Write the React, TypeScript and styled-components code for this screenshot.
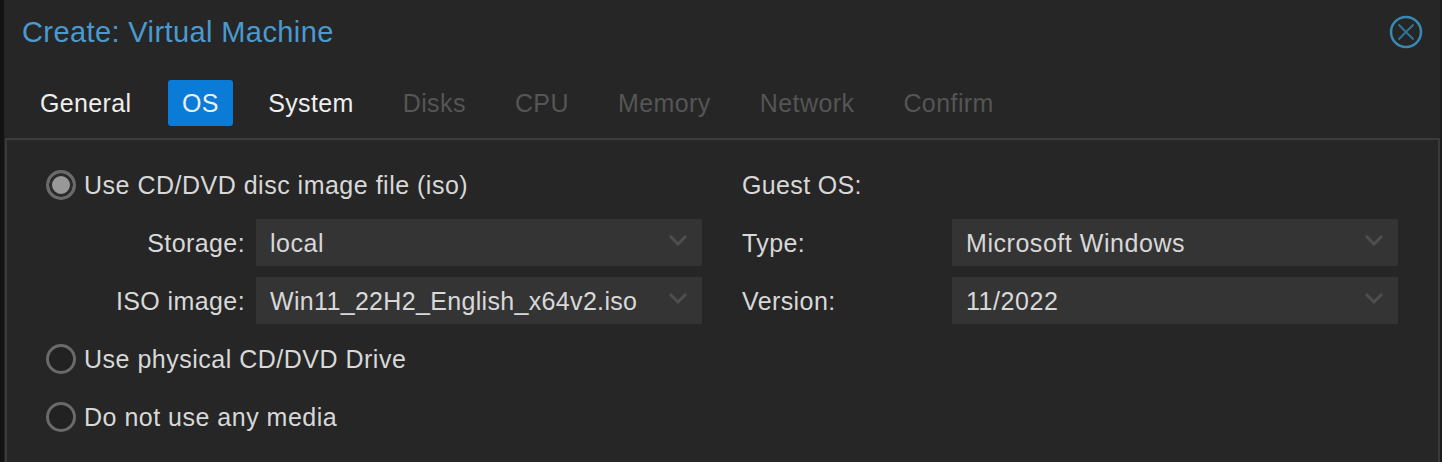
import React from "react";
import styled, { createGlobalStyle } from "styled-components";

const Global = createGlobalStyle`
  html, body { margin: 0; padding: 0; background: #262626; }
  body { font-family: "Liberation Sans", Arial, sans-serif; }
`;

const Window = styled.div`
  width: 1442px;
  height: 462px;
  box-sizing: border-box;
  overflow: hidden;
  background: #262626;
  border-left: 4px solid #131313;
  border-right: 2px solid #1c1c1c;
  display: flex;
  flex-direction: column;
`;

const Header = styled.header`
  height: 64px;
  padding: 0 17px 0 18px;
  box-sizing: border-box;
  display: flex;
  align-items: center;
  justify-content: space-between;
`;

const Title = styled.h1`
  margin: 0;
  font-size: 29px;
  font-weight: 400;
  letter-spacing: 0.4px;
  color: #4a9ad0;
`;

const Close = styled.svg`
  width: 34px;
  height: 34px;
  fill: none;
  stroke: #3a89b5;
`;

const TabBar = styled.nav`
  height: 46px;
  margin-top: 16px;
  padding-left: 22px;
  display: flex;
  gap: 21px;
`;

const Tab = styled.div<{ $active?: boolean; $disabled?: boolean }>`
  height: 46px;
  padding: 0 14px;
  margin: ${(p) => (p.$active ? "0 0.5px 0 1.5px" : "0")};
  box-sizing: border-box;
  display: flex;
  align-items: center;
  border-radius: 3px;
  font-size: 25px;
  letter-spacing: ${(p) => (p.$disabled ? "0.42px" : "0.35px")};
  background: ${(p) => (p.$active ? "#0a7bd6" : "transparent")};
  color: ${(p) => (p.$disabled ? "#555555" : "#eeeeee")};
`;

const Panel = styled.section`
  flex: 1;
  margin-top: 12px;
  margin-left: 1px;
  border-top: 2px solid #3d3d3d;
  border-left: 2px solid #3a3a3a;
  border-right: 2px solid #3a3a3a;
  display: grid;
  grid-template-columns: 696px 1fr;
  padding: 27px 0 0 39px;
`;

const Column = styled.div`
  display: flex;
  flex-direction: column;
`;

const RadioRow = styled.label<{ $gap?: number }>`
  height: 36px;
  margin-top: ${(p) => p.$gap ?? 0}px;
  display: flex;
  align-items: center;
  gap: 8px;
  font-size: 25px;
  letter-spacing: 0.5px;
  color: #d8d8d8;
`;

const Radio = styled.span<{ $checked?: boolean }>`
  width: 30px;
  height: 30px;
  box-sizing: border-box;
  border-radius: 50%;
  border: 3px solid #6a6a6a;
  background: ${(p) => (p.$checked ? "#989898" : "#222")};
  box-shadow: ${(p) => (p.$checked ? "inset 0 0 0 3px #2c2c2c" : "none")};
`;

const Heading = styled.div`
  height: 36px;
  display: flex;
  align-items: center;
  font-size: 25px;
  letter-spacing: 0.35px;
  color: #d8d8d8;
`;

const FieldRow = styled.div<{ $align: string; $gap: number }>`
  display: grid;
  grid-template-columns: 199px 446px;
  column-gap: 11px;
  align-items: center;
  margin-top: ${(p) => p.$gap}px;
  & > span {
    text-align: ${(p) => p.$align};
  }
`;

const FieldLabel = styled.span`
  padding-top: 1px;
  font-size: 25px;
  letter-spacing: 0.4px;
  color: #d8d8d8;
`;

const Select = styled.div<{ $tight?: boolean }>`
  height: 47px;
  padding: 1px 14px 0;
  box-sizing: border-box;
  background: #343434;
  display: flex;
  align-items: center;
  justify-content: space-between;
  font-size: 25px;
  letter-spacing: ${(p) => (p.$tight ? "0.33px" : "0.55px")};
  color: #d8d8d8;
  white-space: nowrap;
`;

const Chevron = styled.svg`
  width: 20px;
  height: 12px;
  margin-bottom: 6px;
  fill: none;
  stroke: #4e4e4e;
  stroke-width: 3;
`;

const tabs: [string, boolean, boolean][] = [
  ["General", false, false],
  ["OS", true, false],
  ["System", false, false],
  ["Disks", false, true],
  ["CPU", false, true],
  ["Memory", false, true],
  ["Network", false, true],
  ["Confirm", false, true],
];

const SelectField = ({ value, tight }: { value: string; tight?: boolean }) => (
  <Select $tight={tight}>
    {value}
    <Chevron viewBox="0 0 20 12">
      <path d="M2 2l8 8 8-8" />
    </Chevron>
  </Select>
);

export default function App() {
  return (
    <Window>
      <Global />
      <Header>
        <Title>Create: Virtual Machine</Title>
        <Close viewBox="0 0 34 34">
          <circle cx="17" cy="17" r="15" strokeWidth="2.5" />
          <path d="M9.5 9.5l15 15M24.5 9.5l-15 15" strokeWidth="2" stroke="#2f7396" />
        </Close>
      </Header>
      <TabBar>
        {tabs.map(([name, active, disabled]) => (
          <Tab key={name} $active={active} $disabled={disabled}>
            {name}
          </Tab>
        ))}
      </TabBar>
      <Panel>
        <Column>
          <RadioRow>
            <Radio $checked />
            Use CD/DVD disc image file (iso)
          </RadioRow>
          <FieldRow $align="right" $gap={16}>
            <FieldLabel>Storage:</FieldLabel>
            <SelectField value="local" />
          </FieldRow>
          <FieldRow $align="right" $gap={11}>
            <FieldLabel>ISO image:</FieldLabel>
            <SelectField value="Win11_22H2_English_x64v2.iso" tight />
          </FieldRow>
          <RadioRow $gap={17}>
            <Radio />
            Use physical CD/DVD Drive
          </RadioRow>
          <RadioRow $gap={22}>
            <Radio />
            Do not use any media
          </RadioRow>
        </Column>
        <Column>
          <Heading>Guest OS:</Heading>
          <FieldRow $align="left" $gap={16}>
            <FieldLabel>Type:</FieldLabel>
            <SelectField value="Microsoft Windows" />
          </FieldRow>
          <FieldRow $align="left" $gap={11}>
            <FieldLabel>Version:</FieldLabel>
            <SelectField value="11/2022" />
          </FieldRow>
        </Column>
      </Panel>
    </Window>
  );
}
